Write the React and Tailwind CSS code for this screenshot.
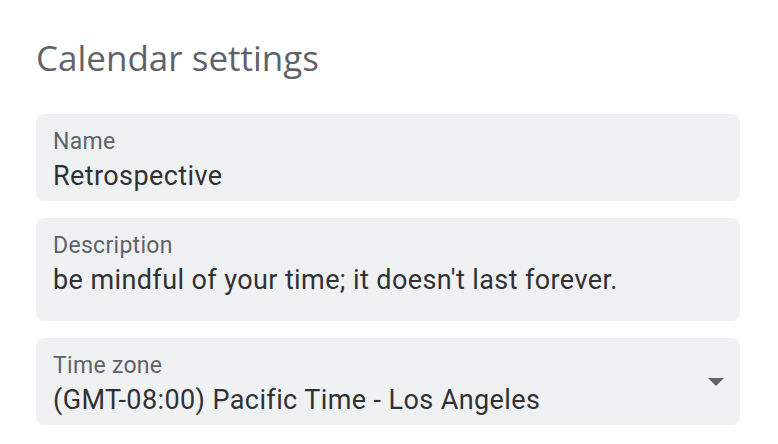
const FIELDS = [
  { label: "Name", value: "Retrospective" },
  { label: "Description", value: "be mindful of your time; it doesn't last forever.", tall: true },
  { label: "Time zone", value: "(GMT-08:00) Pacific Time - Los Angeles", select: true },
];

export default function App() {
  return (
    <div className="min-h-[444px] bg-white pl-9 pt-[34px]">
      <h1 className="font-['Open_Sans',sans-serif] text-[35px] leading-[48px] text-[#5f6368]">
        Calendar settings
      </h1>
      <div className="mt-8 flex w-[704px] flex-col gap-[17px] font-['Roboto',sans-serif]">
        {FIELDS.map((f) => (
          <div
            key={f.label}
            className={
              "flex items-center rounded-lg bg-[#f0f1f3] pl-[17px] pr-4 pt-[13px] " +
              (f.tall ? "pb-[25px]" : "pb-[9px]")
            }
          >
            <div className="flex-1">
              <div className="text-[23px] leading-[30px] tracking-[0.3px] text-[#5f6368]">{f.label}</div>
              <div className="mt-[3px] text-[27px] leading-[32px] tracking-[0.4px] text-[#303134]">
                {f.value}
              </div>
            </div>
            {f.select && (
              <svg width="16" height="8" viewBox="0 0 16 8" className="-mt-[3px]">
                <path d="M0 0h16L8 8z" fill="#5f6368" />
              </svg>
            )}
          </div>
        ))}
      </div>
    </div>
  );
}
